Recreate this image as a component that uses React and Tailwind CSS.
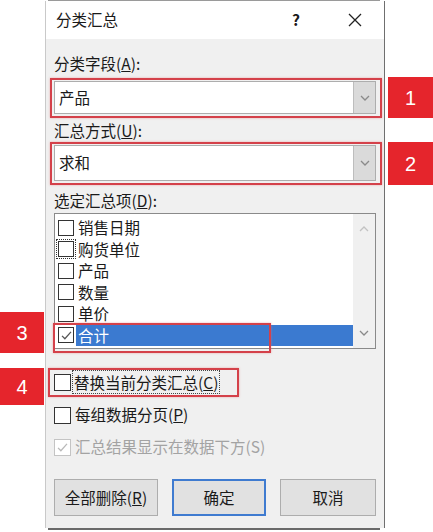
const font = { fontFamily: '"Microsoft YaHei", "Noto Sans CJK SC", "Noto Sans", sans-serif' };

const Box = ({ checked, disabled, focus, size = "w-[16px] h-[16px]" }) => (
  <span className={`relative shrink-0 ${focus ? "outline outline-1 outline-dotted outline-[#333] outline-offset-[1px]" : ""}`}>
    <span
      className={`flex items-center justify-center ${size} border bg-white ${
        disabled ? "border-[#c4c4c4] bg-[#f7f7f7]" : "border-[#333]"
      }`}
    >
      {checked && (
        <svg viewBox="0 0 16 16" className="w-[13px] h-[13px]">
          <polyline
            points="2.5,8.5 6,12 13.5,3.5"
            fill="none"
            stroke={disabled ? "#b9b9b9" : "#555"}
            strokeWidth="1.6"
          />
        </svg>
      )}
    </span>
  </span>
);

const Chevron = ({ up }) => (
  <svg viewBox="0 0 10 6" className="w-[10px] h-[6px]">
    <polyline
      points={up ? "1,5 5,1 9,5" : "1,1 5,5 9,1"}
      fill="none"
      stroke={up ? "#c2c2c2" : "#8a8a8a"}
      strokeWidth="1.3"
    />
  </svg>
);

const Select = ({ value, h }) => (
  <div className={`flex ${h} bg-white border border-[#adadad]`}>
    <div className="flex-1 flex items-center pl-[4px] text-[15.5px] text-[#1a1a1a]">{value}</div>
    <div className="w-[22px] flex items-center justify-center bg-[#dadada] border-l border-[#bdbdbd]">
      <Chevron />
    </div>
  </div>
);

const items = ["销售日期", "购货单位", "产品", "数量", "单价", "合计"];

const Tag = ({ n, className }) => (
  <div
    className={`absolute flex items-center justify-center bg-[#e5252c] text-white text-[20px] ${className}`}
    style={{ fontFamily: '"Liberation Sans", Arial, sans-serif' }}
  >
    {n}
  </div>
);

const Mark = ({ className }) => (
  <div className={`absolute border-2 border-[#d4414a] shadow-[0_0_2px_rgba(230,120,120,0.6)] ${className}`} />
);

export default function App() {
  return (
    <div className="relative w-[433px] h-[532px] bg-white overflow-hidden" style={font}>
      <div className="ml-[48px] w-[332px] h-[1px] bg-[#9a9a9a]" />
      <div className="ml-[45px] w-[340px] border-l border-[#c9c9c9] border-r border-r-[#6f6f6f]">
        {/* title bar */}
        <div className="h-[38px] bg-white flex items-center pl-[10px] text-[15.5px] text-[#1a1a1a]">
          <span className="flex-1">分类汇总</span>
          <span className="w-[20px] text-center mr-[42px] font-semibold">?</span>
          <svg viewBox="0 0 14 14" className="w-[14px] h-[14px] mr-[22px]">
            <path d="M1 1L13 13M13 1L1 13" stroke="#222" strokeWidth="1.3" />
          </svg>
        </div>

        {/* body */}
        <div className="bg-[#f0f0f0] pl-[8px] pr-[8px] pb-[12px] text-[15.5px] text-[#1a1a1a]">
          <div className="h-[42px] flex items-end pb-[8px] leading-[20px]">
            分类字段(<u>A</u>):
          </div>
          <Select value="产品" h="h-[33px]" />
          <div className="h-[31px] flex items-center leading-[20px]">
            汇总方式(<u>U</u>):
          </div>
          <Select value="求和" h="h-[36px]" />
          <div className="h-[32px] flex items-end pb-[3px] leading-[20px]">
            选定汇总项(<u>D</u>):
          </div>

          {/* list box */}
          <div className="h-[136px] flex bg-white border border-[#8a8a8a]">
            <div className="flex-1 pt-[3px]">
              {items.map((t, i) => (
                <div key={t} className="h-[21.5px] flex items-center pl-[3px]">
                  <Box checked={i === 5} focus={i === 1} />
                  <span
                    className={`ml-[2px] pl-[2px] flex-1 h-full flex items-center ${
                      i === 5 ? "bg-[#3b7ad0] text-white" : ""
                    }`}
                  >
                    {t}
                  </span>
                </div>
              ))}
            </div>
            <div className="w-[22px] bg-[#f0f0f0] flex flex-col items-center justify-between py-[12px]">
              <Chevron up />
              <Chevron up={false} />
            </div>
          </div>

          <div className="mt-[22px] h-[22px] flex items-center">
            <Box size="w-[17px] h-[17px]" />
            <span className="ml-[2px] px-[1px] leading-[22px] outline outline-1 outline-dotted outline-[#444]">
              替换当前分类汇总(<u>C</u>)
            </span>
          </div>
          <div className="mt-[11px] h-[22px] flex items-center">
            <Box size="w-[17px] h-[17px]" />
            <span className="ml-[4px]">
              每组数据分页(<u>P</u>)
            </span>
          </div>
          <div className="mt-[10px] h-[22px] flex items-center text-[#a3a3a3]">
            <Box checked disabled size="w-[17px] h-[17px]" />
            <span className="ml-[4px]">汇总结果显示在数据下方(S)</span>
          </div>

          {/* buttons */}
          <div className="mt-[21px] h-[37px] flex">
            <button className="w-[104px] h-full bg-[#e1e1e1] border border-[#adadad]">
              全部删除(<u>R</u>)
            </button>
            <button className="ml-[14px] w-[94px] h-full bg-[#e1e1e1] border-2 border-[#3f7bd0]">确定</button>
            <button className="ml-[14px] w-[96px] h-full bg-[#e1e1e1] border border-[#adadad]">取消</button>
          </div>
        </div>
      </div>
      <div className="ml-[48px] w-[332px] h-[2px] bg-[#6a6a6a]" />

      {/* annotations */}
      <Mark className="left-[50px] top-[78px] w-[332px] h-[40px]" />
      <Mark className="left-[50px] top-[142px] w-[332px] h-[43px]" />
      <Mark className="left-[53px] top-[323px] w-[218px] h-[30px]" />
      <Mark className="left-[48px] top-[368px] w-[191px] h-[29px]" />
      <Tag n="1" className="left-[388px] top-[77px] w-[45px] h-[41px]" />
      <Tag n="2" className="left-[388px] top-[142px] w-[45px] h-[43px]" />
      <Tag n="3" className="left-0 top-[312px] w-[44px] h-[41px]" />
      <Tag n="4" className="left-0 top-[368px] w-[44px] h-[37px]" />
    </div>
  );
}
